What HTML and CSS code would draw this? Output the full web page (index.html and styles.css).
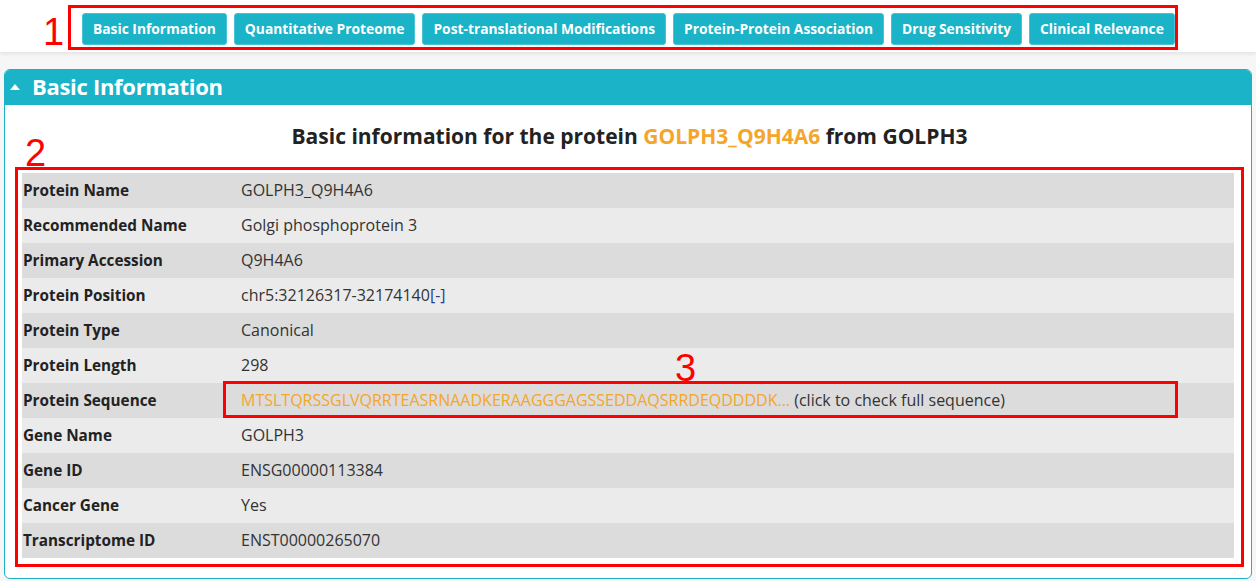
FILE: index.html
```html
<!DOCTYPE html>
<html>
<head>
<meta charset="utf-8">
<link rel="stylesheet" href="styles.css">
</head>
<body>
<div class="topbar">
  <span class="mark mark-1">1</span>
  <nav class="nav">
    <a class="btn">Basic Information</a>
    <a class="btn">Quantitative Proteome</a>
    <a class="btn">Post-translational Modifications</a>
    <a class="btn">Protein-Protein Association</a>
    <a class="btn">Drug Sensitivity</a>
    <a class="btn">Clinical Relevance</a>
  </nav>
</div>
<section class="panel">
  <div class="panel-head"><span class="caret"></span><span>Basic Information</span></div>
  <div class="panel-body">
    <h2 class="title">Basic information for the protein <span class="hl">GOLPH3_Q9H4A6</span> from GOLPH3</h2>
    <div class="box2">
      <span class="mark mark-2">2</span>
      <span class="mark mark-3">3</span>
      <div class="box3"></div>
      <table class="info">
        <tr><th>Protein Name</th><td>GOLPH3_Q9H4A6</td></tr>
        <tr><th>Recommended Name</th><td>Golgi phosphoprotein 3</td></tr>
        <tr><th>Primary Accession</th><td>Q9H4A6</td></tr>
        <tr><th>Protein Position</th><td>chr5:32126317-32174140<span class="strand">[-]</span></td></tr>
        <tr><th>Protein Type</th><td>Canonical</td></tr>
        <tr><th>Protein Length</th><td>298</td></tr>
        <tr><th>Protein Sequence</th><td><span class="hl">MTSLTQRSSGLVQRRTEASRNAADKERAAGGGAGSSEDDAQSRRDEQDDDDK...</span> (click to check full sequence)</td></tr>
        <tr><th>Gene Name</th><td>GOLPH3</td></tr>
        <tr><th>Gene ID</th><td>ENSG00000113384</td></tr>
        <tr><th>Cancer Gene</th><td>Yes</td></tr>
        <tr><th>Transcriptome ID</th><td>ENST00000265070</td></tr>
      </table>
    </div>
  </div>
</section>
</body>
</html>
```
FILE: styles.css
```css
* { box-sizing: border-box; }
html, body { margin: 0; padding: 0; }
body {
  background: #f6f6f6;
  font-family: "Open Sans", "Noto Sans", sans-serif;
  color: #222;
  width: 1256px;
  height: 581px;
  overflow: hidden;
}
.topbar {
  position: relative;
  height: 52px;
  background: #fff;
  box-shadow: 0 2px 4px rgba(0,0,0,0.08);
  padding: 5px 0 0 68px;
}
.nav {
  display: flex;
  gap: 7px;
  width: 1110px;
  height: 45px;
  border: 3px solid #ff0000;
  padding: 5px 4px 2px 11px;
}
.btn {
  display: flex;
  align-items: center;
  height: 32px;
  padding: 0 10px 1px;
  background: #1ab3c8;
  border: 1px solid #48c4d4;
  border-radius: 3px;
  color: #fff;
  font-weight: 700;
  font-size: 13.8px;
  white-space: nowrap;
}
.mark {
  position: absolute;
  color: #ff0000;
  font-family: "Liberation Sans", Arial, sans-serif;
  font-size: 38px;
  line-height: 1;
}
.mark-1 { left: 43px; top: 13px; }
.panel {
  margin: 17px 4px 0 4px;
  height: 510px;
  background: #fff;
  border: 1px solid #1ab3c8;
  border-radius: 6px;
  overflow: hidden;
}
.panel-head {
  display: flex;
  align-items: center;
  gap: 12px;
  height: 35px;
  padding: 0 0 4px 5px;
  background: #1ab3c8;
  color: #fff;
  font-weight: 700;
  font-size: 22px;
  letter-spacing: -0.3px;
}
.caret {
  width: 0; height: 0;
  margin-top: 3px;
  border-left: 5px solid transparent;
  border-right: 5px solid transparent;
  border-bottom: 6px solid #fff;
}
.panel-body {
  padding: 0 7px 10px 10px;
}
.title {
  margin: 0;
  padding: 17px 0 0 0;
  height: 62px;
  text-align: center;
  font-size: 21px;
  font-weight: 700;
  color: #222;
}
.hl { color: #f4a62a; }
.box2 {
  position: relative;
  border: 3px solid #ff0000;
  padding: 3px 7px 6px 4px;
}
.mark-2 { left: 7px; top: -36px; }
.mark-3 { left: 657px; top: 179px; }
.box3 {
  position: absolute;
  left: 205px;
  top: 211px;
  width: 955px;
  height: 37px;
  border: 3px solid #ff0000;
}
.info {
  width: 100%;
  border-collapse: collapse;
  font-size: 15.3px;
}
.info tr { height: 35px; }
.info tr:nth-child(odd) { background: #dcdcdc; }
.info tr:nth-child(even) { background: #ebebeb; }
.info th {
  width: 219px;
  text-align: left;
  padding: 0 0 2px 1px;
  font-weight: 700;
  color: #222;
}
.info td {
  padding: 0 0 2px 0;
  font-size: 16px;
  color: #333;
}
.strand { color: #2a3a8c; }
```
